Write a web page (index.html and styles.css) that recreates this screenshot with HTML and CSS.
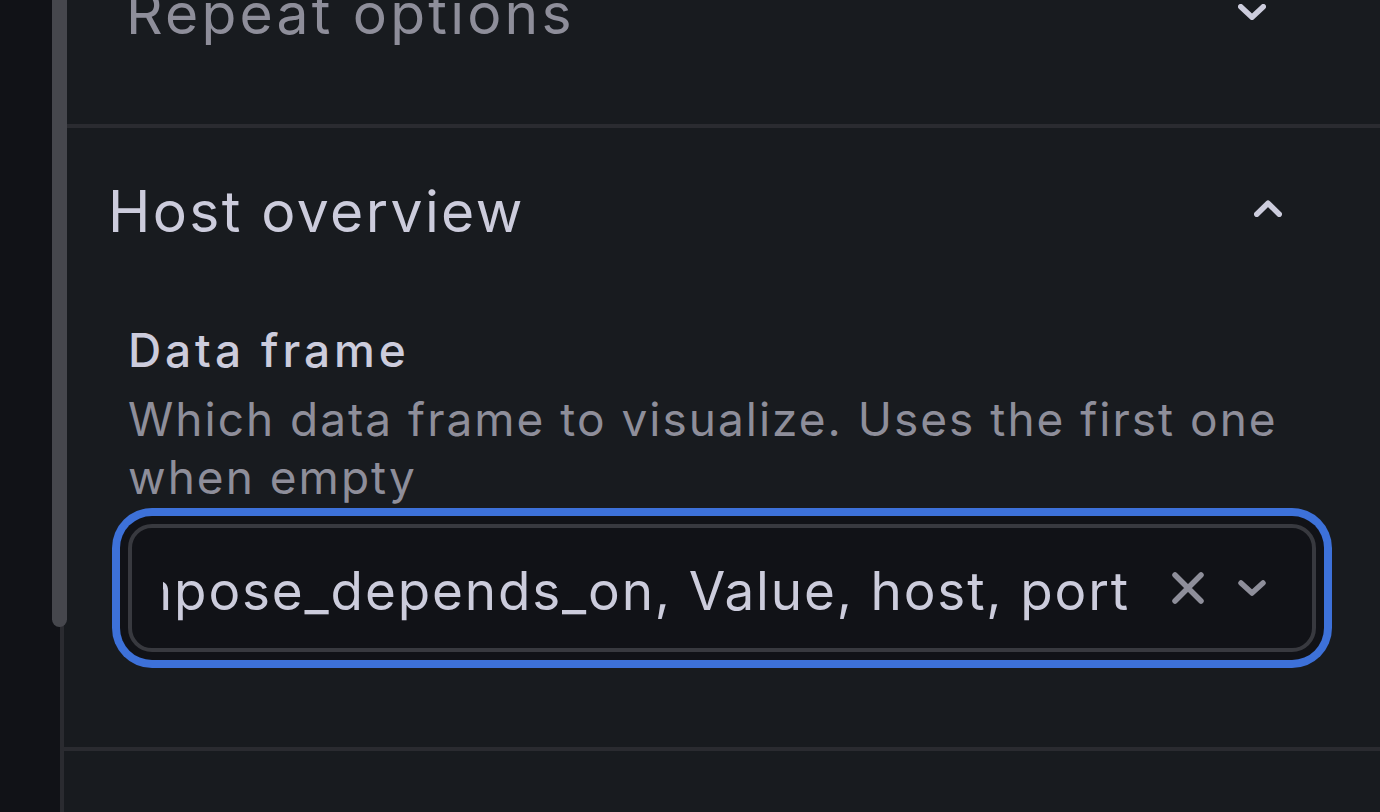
FILE: index.html
```html
<!DOCTYPE html>
<html lang="en">
<head>
    <meta charset="UTF-8">
    <meta name="viewport" content="width=device-width, initial-scale=1.0">
    <title>Panel options</title>
    <link rel="stylesheet" href="styles.css">
</head>
<body>
    <div class="sidebar"></div>
    <div class="scroll-thumb"></div>
    <div class="pane">
        <div class="section section-repeat">
            <div class="section-header">
                <span class="section-title">Repeat options</span>
                <svg class="chevron" width="28" height="16" viewBox="0 0 28 16">
                    <path d="M2.75 2.75 L14 13.25 L25.25 2.75" />
                </svg>
            </div>
        </div>
        <div class="section section-open">
            <div class="section-header">
                <span class="section-title">Host overview</span>
                <svg class="chevron" width="28" height="17" viewBox="0 0 28 17">
                    <path d="M2.75 14.25 L14 3.25 L25.25 14.25" />
                </svg>
            </div>
            <div class="section-body">
                <div class="field-label">Data frame</div>
                <div class="field-desc">Which data frame to visualize. Uses the first one when empty</div>
                <div class="select">
                    <div class="select-value">
                        <span>Series: time, compose_depends_on, Value, host, port</span>
                    </div>
                    <svg class="select-clear" width="32" height="32" viewBox="0 0 32 32">
                        <path d="M3 3 L29 29 M29 3 L3 29" />
                    </svg>
                    <svg class="select-arrow" width="28" height="18" viewBox="0 0 28 18">
                        <path d="M3 4 L14 14 L25 4" />
                    </svg>
                </div>
            </div>
        </div>
    </div>
</body>
</html>
```

FILE: styles.css
```css
* {
    margin: 0;
    padding: 0;
    box-sizing: border-box;
}

body {
    display: flex;
    height: 100vh;
    overflow: hidden;
    position: relative;
    background: #181b1f;
    font-family: Inter, "Noto Sans", sans-serif;
    color: #ccccdc;
}

.sidebar {
    width: 60px;
    flex-shrink: 0;
    background: #111217;
}

.scroll-thumb {
    position: absolute;
    left: 52px;
    top: -20px;
    width: 15px;
    height: 647px;
    border-radius: 8px;
    background: #46474d;
}

.pane {
    flex: 1;
    min-width: 0;
    display: flex;
    flex-direction: column;
    border-left: 4px solid #2a2b30;
}

.section {
    border-bottom: 4px solid #2a2b30;
}

.section-header {
    display: flex;
    align-items: center;
    justify-content: space-between;
}

.section-title {
    font-size: 57px;
    line-height: 80px;
    letter-spacing: 2.4px;
}

.chevron path,
.select-clear path,
.select-arrow path {
    fill: none;
    stroke: currentColor;
    stroke-width: 5.5;
    stroke-linecap: round;
    stroke-linejoin: round;
}

/* collapsed section, scrolled half out of view */
.section-repeat {
    margin-top: -26px;
    padding-bottom: 70px;
}

.section-repeat .section-header {
    height: 80px;
    padding: 0 114px 0 62px;
}

.section-repeat .section-title {
    color: #8e8e9a;
    letter-spacing: 3.2px;
}

.section-repeat .chevron {
    margin-bottom: 4px;
}

.section-open .section-header {
    height: 168px;
    padding: 0 98px 0 44px;
}

.section-open .chevron {
    margin-bottom: 8px;
}

.section-body {
    padding: 26px 64px 95px;
}

.field-label {
    font-size: 46px;
    line-height: 56px;
    font-weight: 500;
    letter-spacing: 3.9px;
    margin-bottom: 12px;
}

.field-desc {
    font-size: 46px;
    line-height: 58px;
    letter-spacing: 2px;
    color: #8e8e9a;
    margin-bottom: 18px;
}

.select {
    display: flex;
    align-items: center;
    height: 128px;
    padding: 5px 46px 0 31px;
    background: #111217;
    border: 4px solid #38393f;
    border-radius: 24px;
    box-shadow: 0 0 0 8px #111217, 0 0 0 16px #3d71d9;
}

/* value scrolled to its end, start clipped on the left */
.select-value {
    flex: 1;
    min-width: 0;
    display: flex;
    justify-content: flex-end;
    overflow: hidden;
    white-space: nowrap;
    font-size: 53px;
    line-height: 64px;
    letter-spacing: 1.85px;
    margin-right: 42px;
}

.select-clear,
.select-arrow {
    flex-shrink: 0;
    color: #8e8e9a;
    margin-bottom: 5px;
}

.select-clear {
    margin-right: 34px;
}
```
